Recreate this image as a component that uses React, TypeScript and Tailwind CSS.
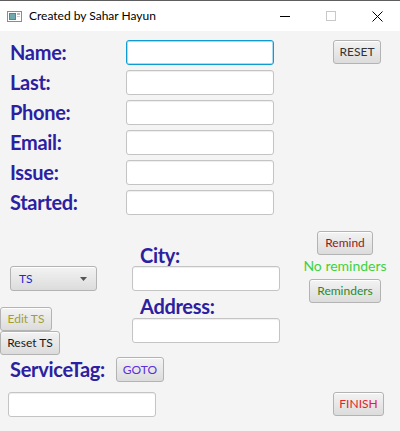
import React from 'react';

// JavaFX-ish form window, Modena look
const label = "font-['Lato',sans-serif] font-bold text-[20px] text-[#2b21a0] tracking-[-0.3px] whitespace-nowrap";
const field =
  "block h-[25px] w-[148px] rounded-[3px] border border-[#c4c4c4] bg-white shadow-[inset_0_1px_1px_rgba(0,0,0,0.07)] outline-none";
const face =
  "flex h-[24px] items-center rounded-[3px] border border-[#b3b3b3] bg-linear-to-b from-[#f3f3f3] to-[#dcdcdc] font-['Lato',sans-serif] text-[12px] leading-none shadow-[inset_0_1px_0_rgba(255,255,255,0.9)]";
const btn = `${face} justify-center`;

const rows = ['Name:', 'Last:', 'Phone:', 'Email:', 'Issue:', 'Started:'];

const WindowIcon = () => (
  <svg width="15" height="11" viewBox="0 0 15 11">
    <rect x="0.5" y="0.5" width="14" height="10" fill="#ffffff" stroke="#8c8c8c" />
    <rect x="2" y="2" width="7" height="7" fill="#4f8a92" />
    <rect x="3" y="3" width="5" height="5" fill="#6fa8ae" />
    <rect x="10" y="2" width="3" height="2" fill="#b9b9b9" />
    <rect x="10" y="5" width="3" height="1" fill="#cfcfcf" />
  </svg>
);

export default function App() {
  return (
    <div className="h-[431px] w-[400px] overflow-hidden bg-[#f4f4f4]">
      {/* title bar */}
      <div className="flex h-[31px] items-center border-t border-[#5e5e5e] bg-white">
        <div className="ml-[7px] mt-[1px]">
          <WindowIcon />
        </div>
        <span className="ml-[7px] font-['Lato',sans-serif] text-[12px] text-black">Created by Sahar Hayun</span>
        <div className="ml-auto flex h-full">
          <div className="flex w-[46px] items-center justify-center">
            <div className="h-px w-[10px] bg-black" />
          </div>
          <div className="flex w-[46px] items-center justify-center">
            <div className="h-[10px] w-[10px] border border-[#c8c8c8]" />
          </div>
          <div className="flex w-[46px] items-center justify-center">
            <svg width="11" height="11" viewBox="0 0 11 11">
              <path d="M0.5 0.5 L10.5 10.5 M10.5 0.5 L0.5 10.5" stroke="#000" strokeWidth="1" />
            </svg>
          </div>
        </div>
      </div>

      {/* upper form */}
      <div className="flex pt-[9px]">
        <div className="flex flex-col gap-[5px]">
          {rows.map((r, i) => (
            <div key={r} className="flex h-[25px] items-center">
              <div className={`${label} w-[126px] pl-[10px] leading-[25px]`}>{r}</div>
              <input
                className={
                  i === 0
                    ? 'block h-[25px] w-[148px] rounded-[3px] border border-[#0e9ad4] bg-white shadow-[inset_0_0_0_1px_#a9dcf2] outline-none'
                    : field
                }
              />
            </div>
          ))}
        </div>
        <div className="ml-[59px]">
          <button className={`${btn} w-[48px] text-[#333333]`}>RESET</button>
        </div>
      </div>

      {/* middle block */}
      <div className="flex h-[140px] items-start">
        <div className="flex w-[132px] flex-col items-start">
          <div className={`${face} ml-[10px] mt-[51px] h-[25px] w-[87px] justify-between pl-[8px] pr-[9px] text-[#2424d6]`}>
            <span>TS</span>
            <svg width="7" height="4" viewBox="0 0 7 4">
              <path d="M0 0 H7 L3.5 4 Z" fill="#555555" />
            </svg>
          </div>
          <button className={`${btn} mt-[16px] w-[52px] text-[#a59d2c]`}>Edit TS</button>
          <button className={`${btn} w-[60px] text-[#1a1a1a]`}>Reset TS</button>
        </div>

        <div className="flex w-[148px] flex-col">
          <div className={`${label} ml-[8px] mt-[30px] leading-[20px]`}>City:</div>
          <input className={`${field} mt-[1px]`} />
          <div className={`${label} ml-[8px] mt-[5px] leading-[20px]`}>Address:</div>
          <input className={`${field} mt-[2px]`} />
        </div>

        <div className="ml-[26px] flex w-[78px] flex-col items-center">
          <button className={`${btn} mt-[16px] w-[56px] text-[#8e1b1b]`}>Remind</button>
          <div className="mb-[2px] whitespace-nowrap font-['Lato',sans-serif] text-[14px] leading-[22px] text-[#3ed23e]">
            No reminders
          </div>
          <button className={`${btn} w-[72px] text-[#2a8a2a]`}>Reminders</button>
        </div>
      </div>

      {/* service tag */}
      <div className="mt-[2px] flex h-[25px] items-center pl-[10px]">
        <div className={`${label} w-[106px] leading-[25px]`}>ServiceTag:</div>
        <button className={`${btn} h-[25px] w-[48px] text-[#5b2fdc]`}>GOTO</button>
      </div>

      <div className="mt-[10px] flex items-start pl-[8px]">
        <input className={field} />
        <button className={`${btn} ml-[177px] w-[51px] text-[#e0242a]`}>FINISH</button>
      </div>
    </div>
  );
}
